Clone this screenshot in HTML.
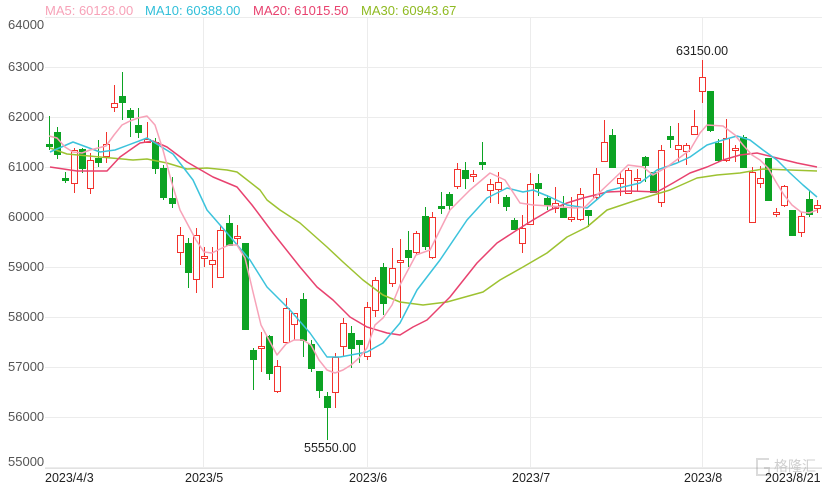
<!DOCTYPE html>
<html><head><meta charset="utf-8">
<style>
html,body{margin:0;padding:0;background:#fff;}
body{width:830px;height:484px;position:relative;overflow:hidden;font-family:"Liberation Sans",Arial,sans-serif;}
.t{position:absolute;white-space:nowrap;}
.lg{top:3px;font-size:13px;}
.yl{left:8px;font-size:13px;color:#555;}
.xl{top:471px;font-size:12.5px;color:#222;}
.an{font-size:12.5px;color:#222;}
</style></head><body>
<svg id="s" width="830" height="484" style="position:absolute;left:0;top:0">
<g stroke="#ececec" stroke-width="1">
<line x1="45" x2="822" y1="17.5" y2="17.5"/><line x1="45" x2="822" y1="67.5" y2="67.5"/>
<line x1="45" x2="822" y1="117.5" y2="117.5"/><line x1="45" x2="822" y1="167.5" y2="167.5"/>
<line x1="45" x2="822" y1="217.5" y2="217.5"/><line x1="45" x2="822" y1="267.5" y2="267.5"/>
<line x1="45" x2="822" y1="317.5" y2="317.5"/><line x1="45" x2="822" y1="367.5" y2="367.5"/>
<line x1="45" x2="822" y1="417.5" y2="417.5"/><line x1="45" x2="822" y1="467.5" y2="467.5"/>
<line x1="203.5" x2="203.5" y1="17" y2="467"/><line x1="367.5" x2="367.5" y1="17" y2="467"/>
<line x1="530.5" x2="530.5" y1="17" y2="467"/><line x1="702.5" x2="702.5" y1="17" y2="467"/>
</g>
<g id="c"></g>
<g fill="none" stroke-width="1.5" stroke-linejoin="round">
<polyline stroke="#9dc231" points="50,148 67,154 100,157 133,160 147,159 167,163 187,169 207,168 227,170 237,172 260,190 267,200 280,210 300,223 327,247 343,262 363,280 383,295 400,302 423,305 447,302 483,292 500,280 523,267 547,253 567,237 587,227 607,210 637,200 670,190 697,178 717,175 740,173 763,169 790,170 817,171"/>
<polyline stroke="#e8426f" points="50,167 77,171 107,171 120,157 140,143 153,141 167,147 187,162 213,177 237,187 252,205 273,233 300,267 317,287 333,300 350,317 367,327 387,333 400,335 413,327 427,320 450,297 477,263 497,243 517,230 533,220 550,210 567,203 583,198 607,192 630,191 657,192 673,183 690,173 707,167 723,160 740,155 757,153 777,158 797,163 817,167"/>
<polyline stroke="#3cc3dc" points="50,152 73,142 100,152 115,150 147,138 173,154 193,180 207,210 227,233 250,260 267,287 290,310 310,333 327,357 340,357 367,352 383,343 400,323 417,290 440,260 467,220 487,198 507,188 523,192 533,190 550,197 567,205 587,208 607,191 623,187 640,183 657,170 677,163 690,157 707,145 723,140 737,136 750,140 763,150 777,160 790,173 803,185 817,197"/>
<polyline stroke="#f7a2b8" points="49,136 57,138 65,147 73,152 82,153 90,150 98,148 106,146 114,135 122,125 130,121 138,118 147,116 155,125 163,150 171,180 180,210 188,225 196,240 204,252 212,253 220,249 229,245 237,245 245,258 253,292 261,325 269,340 277,355 286,344 294,340 303,340 311,345 319,360 327,370 335,373 343,370 351,365 359,358 367,348 375,325 383,318 392,305 400,285 416,255 430,250 450,210 470,190 490,173 505,180 520,203 533,205 550,206 575,208 585,207 600,192 620,173 628,165 643,167 653,175 667,167 690,150 700,133 707,125 723,126 735,135 743,145 752,155 760,160 768,168 776,182 784,195 792,205 801,212 809,213 817,210"/>
</g>
<line x1="45" x2="822" y1="468.5" y2="468.5" stroke="#e2e2e2"/>
<g opacity="0.35" fill="none" stroke="#999" stroke-width="2">
<path d="M769 459h-12v16h12v-7h-5"/>
</g>
</svg>
<div class="t lg" style="left:45px;color:#f7a2b8">MA5: 60128.00</div>
<div class="t lg" style="left:145px;color:#31bfd9">MA10: 60388.00</div>
<div class="t lg" style="left:253px;color:#e8426f">MA20: 61015.50</div>
<div class="t lg" style="left:361px;color:#8fba22">MA30: 60943.67</div>
<div class="t yl" style="top:17px">64000</div>
<div class="t yl" style="top:59px">63000</div>
<div class="t yl" style="top:109px">62000</div>
<div class="t yl" style="top:159px">61000</div>
<div class="t yl" style="top:209px">60000</div>
<div class="t yl" style="top:259px">59000</div>
<div class="t yl" style="top:309px">58000</div>
<div class="t yl" style="top:359px">57000</div>
<div class="t yl" style="top:409px">56000</div>
<div class="t yl" style="top:454px">55000</div>
<div class="t xl" style="left:45px">2023/4/3</div>
<div class="t xl" style="left:185px">2023/5</div>
<div class="t xl" style="left:349px">2023/6</div>
<div class="t xl" style="left:512px">2023/7</div>
<div class="t xl" style="left:684px">2023/8</div>
<div class="t xl" style="left:765px">2023/8/21</div>
<div class="t an" style="left:676px;top:44px">63150.00</div>
<div class="t an" style="left:304px;top:441px">55550.00</div>
<div class="t" style="left:774px;top:456px;font-size:14px;color:#bbb;opacity:.7;font-family:'Liberation Sans','Noto Sans CJK SC',sans-serif">格隆汇</div>
<script>
var d=[
[49,144,146,116,150,0],[57,132,154,127,159,0],[65,178,180,172,183,0],[74,150,183,148,193,1],[82,149,168,148,173,0],[90,160,188,153,194,1],[98,158,162,140,167,0],[106,144,156,132,163,1],[114,103,107,85,112,1],[122,96,102,72,120,0],[130,110,117,108,137,0],[138,125,132,108,138,0],[147,139,142,122,142,1],[155,142,168,138,174,0],[163,168,197,165,200,0],[172,198,203,177,208,0],
[180,235,252,227,265,1],[188,243,272,238,288,0],[196,235,279,228,293,1],[204,256,258,247,267,1],[212,260,264,247,288,1],[220,230,277,225,278,1],[229,223,245,215,245,0],[237,236,238,225,245,1],[245,243,329,243,330,0],[253,350,359,348,390,0],[261,346,348,332,372,1],[269,336,373,335,380,0],[277,366,391,360,393,1],[286,308,342,298,342,1],[294,313,324,313,340,1],[303,299,340,293,357,0],[311,344,368,340,372,0],[319,371,390,371,398,0],[327,396,407,392,440,0],[335,357,392,353,408,1],[343,323,346,318,357,1],[351,333,348,326,368,0],[359,340,344,340,363,0],[367,307,356,302,360,1],[375,280,310,277,317,1],[383,267,303,263,315,0],[392,268,283,248,287,1],[400,260,262,239,318,1],[408,250,257,231,267,0],
[416,233,252,231,255,1],[425,216,246,207,250,0],[432,217,257,212,259,1],[441,206,208,192,214,0],[449,194,205,192,210,0],[457,169,186,163,189,1],[465,170,178,162,189,0],[473,174,176,170,182,1],[482,162,164,142,170,0],[490,184,190,179,203,1],[498,182,189,172,204,1],[506,197,206,195,211,0],[514,220,229,218,230,0],[522,228,243,215,253,1],[530,184,224,173,225,1],[538,183,188,174,196,0],[547,198,205,195,210,0],[555,203,208,187,213,1],[563,208,217,196,218,0],[571,217,219,197,222,1],[580,194,219,188,221,1],[588,210,215,210,227,0],[596,174,197,168,200,1],
[604,142,161,120,161,1],[612,135,167,129,167,0],[620,178,183,173,196,1],[628,170,193,168,193,1],[637,178,180,169,192,1],[645,157,165,156,182,0],[653,172,192,172,192,0],[661,150,202,145,207,1],[670,136,139,126,148,0],[678,145,149,123,163,1],[686,145,151,143,165,1],[694,126,134,110,135,1],[702,77,91,60,103,1],[710,91,130,91,132,0],[718,143,160,139,162,0],[726,138,160,119,162,1],[735,148,150,145,162,1],[743,137,167,135,167,0],[752,172,222,167,222,1],[760,178,183,166,188,1],[768,158,200,158,200,0],[776,212,214,208,217,1],[784,186,205,185,207,1],[792,210,235,210,235,0],[801,216,232,212,237,1],[809,199,214,190,217,0],[817,205,208,200,213,1]];
var h='';
d.forEach(function(c){var x=c[0],r=c[5],col=r?'#f2322c':'#0ca323';
h+='<line x1="'+(x+.5)+'" x2="'+(x+.5)+'" y1="'+c[3]+'" y2="'+c[1]+'" stroke="'+col+'"/>';
h+='<line x1="'+(x+.5)+'" x2="'+(x+.5)+'" y1="'+c[2]+'" y2="'+c[4]+'" stroke="'+col+'"/>';
var hh=Math.max(c[2]-c[1],1);
if(r)h+='<rect x="'+(x-2.5)+'" y="'+(c[1]+.5)+'" width="6" height="'+hh+'" fill="#fff" stroke="'+col+'"/>';
else h+='<rect x="'+(x-3)+'" y="'+c[1]+'" width="7" height="'+(hh+1)+'" fill="'+col+'"/>';});
document.getElementById('c').innerHTML=h;
</script>
</body></html>
